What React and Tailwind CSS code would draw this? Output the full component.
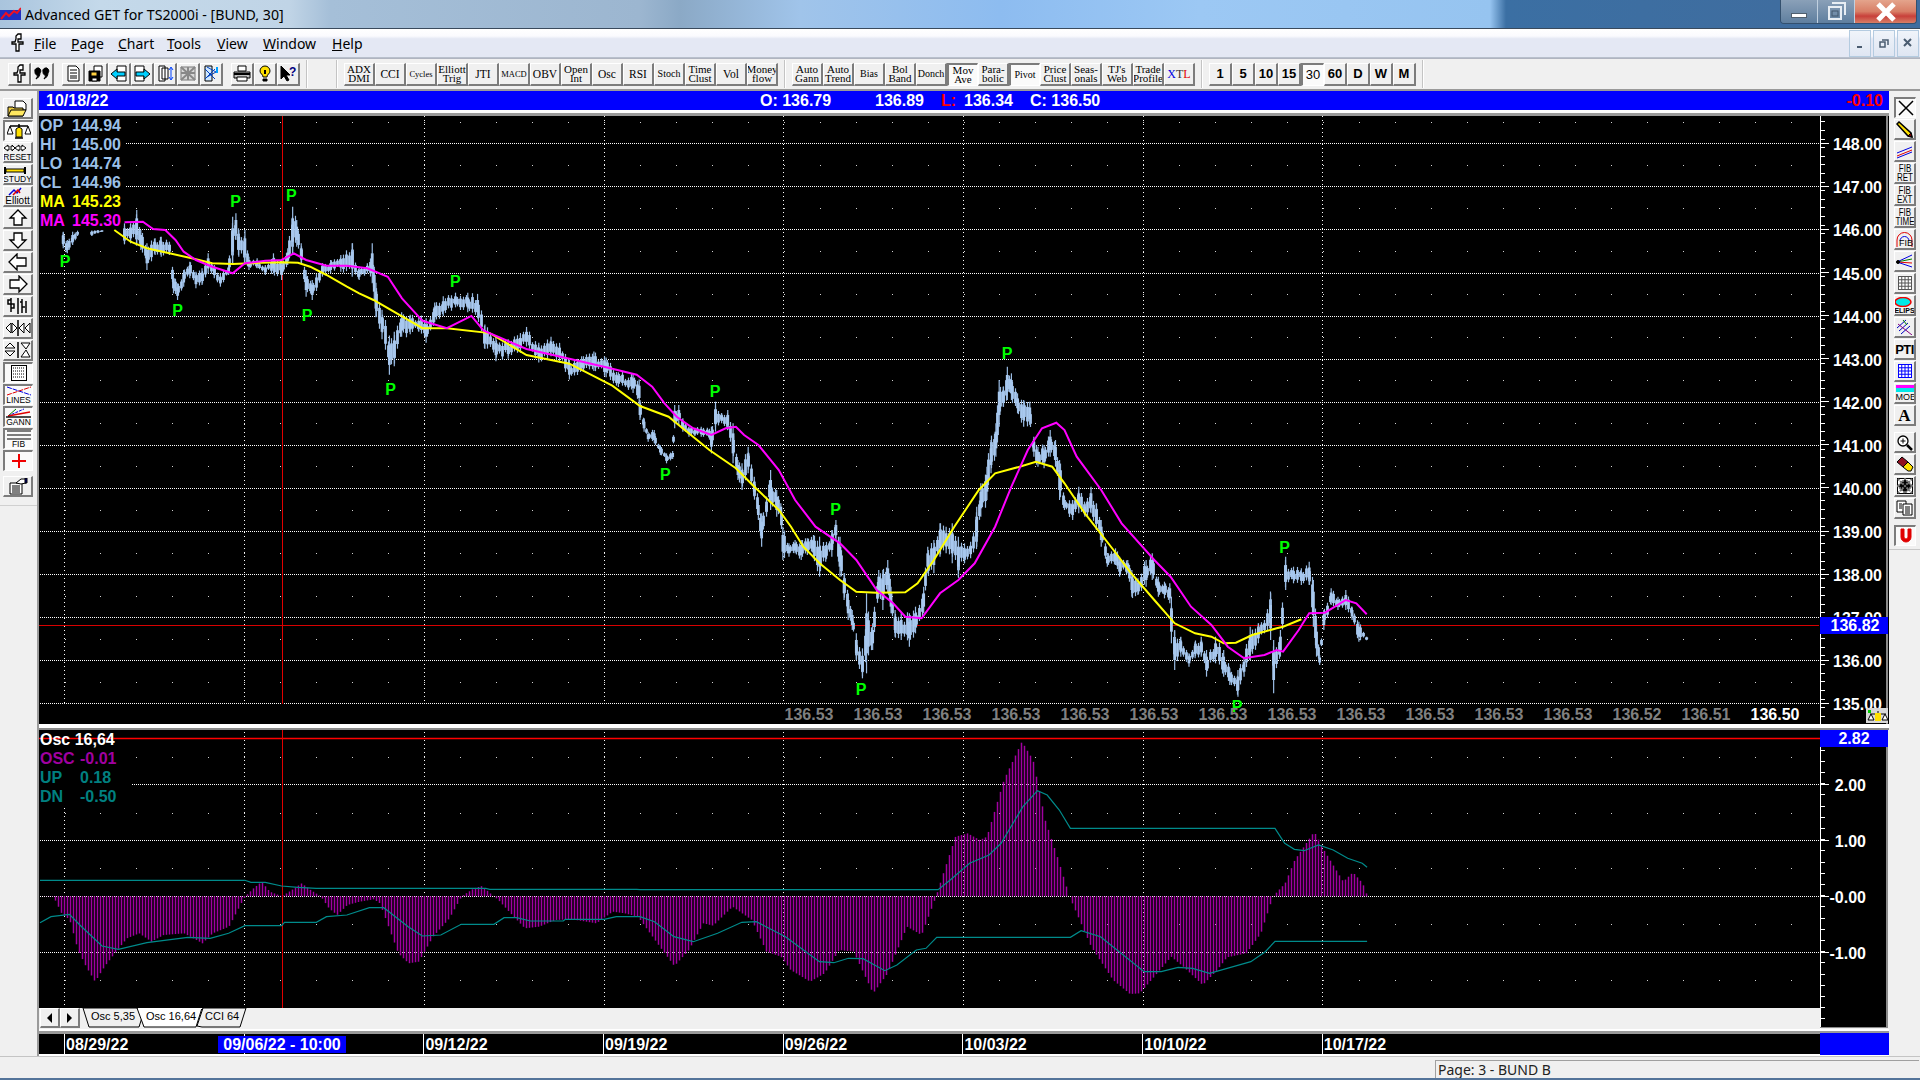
import React from 'react'

// --- chart data, all worked out in page pixels ---
const z1 = (a) => a.map(([x, y, h = 0]) => [x / 2.45, y / 3, h / 3])
const z9 = (a) => a.map(([x, y, h = 0]) => [640 + x / 2.45, 300 + y / 3, h / 3])
const z10 = (a) => a.map(([x, y, h = 0]) => [1100 + x / 1.912, 500 + y / 3, h / 3])
const z8 = (a) => a.map(([x, y]) => [x / 2.45, 700 + y / 3])
const z11 = (a) => a.map(([x, y]) => [640 + x / 2.063, 720 + y / 3])
const vw = (a) => a.map(([x, y, h = 0]) => [x * 1.2245, y * 1.2245, h * 1.2245])

const priceSegs = [
  z1([[155, 720, 25], [165, 740, 20], [178, 715, 20], [190, 700, 8]]),
  z1([[225, 700, 8], [240, 695, 5], [250, 693, 3]]),
  [
    ...z1([[305, 700, 30], [320, 700, 30], [335, 680, 50], [345, 720, 30], [360, 770, 40], [380, 740, 25], [395, 740, 30], [415, 745, 20], [425, 850, 30], [435, 875, 25], [450, 835, 25], [465, 810, 25], [480, 840, 25], [495, 830, 25], [510, 790, 30], [525, 815, 20], [540, 840, 20], [560, 810, 15], [570, 720, 70], [578, 680, 40], [585, 730, 40], [600, 740, 50], [610, 790, 20], [630, 790, 15], [650, 810, 15], [670, 790, 30], [690, 810, 30], [705, 770, 25], [717, 690, 70], [727, 700, 40], [738, 760, 30], [750, 850, 40], [765, 870, 30], [790, 810, 20], [810, 800, 20], [835, 790, 25], [863, 780, 50], [880, 820, 20], [900, 805, 15], [912, 790, 60], [917, 850, 50]]),
    ...vw([[307, 245, 14], [312, 265, 12], [318, 290, 16], [322, 285, 14], [328, 265, 10], [335, 265, 8], [342, 265, 6], [348, 270, 10], [355, 255, 8], [362, 250, 8], [372, 245, 6], [382, 247, 8], [390, 250, 10], [396, 275, 10], [405, 285, 10], [415, 285, 8], [425, 280, 8], [430, 275, 8], [440, 288, 8], [450, 283, 8], [457, 288, 8], [465, 302, 8], [475, 297, 6], [485, 295, 8], [495, 300, 8], [505, 310, 6], [517, 313, 8], [522, 320, 10]]),
    ...z9([[0, 330, 30], [10, 375, 20], [20, 410, 15], [35, 410, 20], [50, 450, 15], [65, 475, 15], [80, 465, 12], [85, 350, 35], [95, 345, 30], [105, 375, 20], [120, 395, 15], [135, 395, 12], [150, 395, 15], [165, 395, 12], [175, 420, 40], [185, 350, 45], [200, 355, 15], [215, 360, 30], [228, 430, 60], [240, 510, 30], [250, 530, 40], [265, 480, 40], [280, 560, 30], [290, 630, 30], [298, 690, 50], [310, 620, 30], [320, 570, 60], [335, 610, 40], [345, 630, 20], [350, 730, 50], [365, 750, 20], [380, 740, 20], [395, 750, 30], [410, 740, 25], [425, 740, 35], [440, 770, 60], [455, 760, 25], [470, 730, 40], [480, 690, 30], [490, 770, 60], [500, 860, 40], [510, 920, 40], [520, 960, 30], [530, 1040, 40], [545, 1090, 45], [555, 1000, 120], [570, 1010, 40], [585, 850, 40], [595, 870, 60], [607, 830, 50], [615, 900, 40], [625, 970, 40], [640, 980, 40], [660, 990, 50], [675, 960, 40], [695, 900, 40], [705, 780, 40], [720, 770, 50], [735, 720, 50], [750, 720, 40], [765, 730, 60], [780, 770, 60], [795, 760, 30], [810, 750, 25], [825, 680, 60], [835, 600, 50], [850, 550, 50], [860, 470, 50], [872, 420, 50], [880, 310, 70], [890, 290, 30], [900, 250, 50], [910, 260, 40], [925, 310, 30], [940, 340, 40], [955, 340, 35], [965, 440, 30], [975, 470, 30], [990, 470, 35], [1005, 430, 40], [1018, 460, 40], [1028, 540, 60], [1040, 610, 20], [1060, 630, 30], [1075, 600, 40], [1090, 630, 20], [1105, 600, 40], [1118, 650, 40], [1130, 700, 40], [1145, 780, 20], [1165, 770, 25], [1175, 800, 30], [1195, 800, 20], [1205, 850, 40], [1220, 860, 25], [1240, 820, 40], [1255, 800, 40], [1270, 860, 30], [1285, 870, 25], [1298, 880, 30], [1302, 960, 70], [1310, 1050, 60], [1325, 1040, 30], [1345, 1080, 20], [1360, 1050, 25], [1375, 1040, 30], [1388, 1090, 40], [1410, 1050, 40], [1430, 1090, 40], [1445, 1130, 25], [1465, 1150, 40], [1480, 1100, 30], [1495, 1030, 50], [1515, 1000, 30], [1530, 980, 20], [1545, 950, 70]]),
    ...z10([[332, 500, 80], [345, 430, 40], [355, 220, 50], [370, 225, 25], [385, 230, 25], [400, 220, 35], [408, 310, 70], [414, 420, 50], [420, 480, 15], [428, 360, 30], [442, 290, 25], [455, 310, 20], [470, 300, 30], [482, 340, 20], [495, 395, 30], [510, 415, 5]]),
  ],
]

const yellow = [
  ...z1([[280, 690], [320, 725], [360, 745], [415, 760], [470, 775], [520, 790], [570, 792], [640, 788], [690, 787], [730, 788], [760, 800], [800, 825], [850, 860], [880, 880], [915, 900]]),
  ...vw([[345, 268], [365, 268], [400, 272], [430, 290], [465, 297], [500, 315]]),
  ...z9([[0, 318], [70, 350], [100, 380], [130, 410], [170, 450], [235, 505], [280, 560], [340, 630], [370, 680], [400, 740], [440, 790], [490, 840], [530, 875], [580, 878], [650, 877], [680, 850], [720, 780], [770, 680], [830, 570], [870, 520], [930, 500], [970, 485], [1010, 500], [1040, 550], [1090, 640], [1160, 750], [1200, 815], [1260, 900], [1310, 970], [1360, 1000], [1400, 1010], [1430, 1030], [1460, 1028], [1500, 1005], [1560, 985]]),
  ...z10([[350, 380], [385, 358]]),
]

const magenta = [
  ...z1([[305, 667], [350, 665], [375, 687], [405, 690], [430, 720], [450, 755], [480, 780], [520, 800], [570, 820], [600, 790], [650, 782], [690, 780], [720, 760], [750, 780], [800, 797], [850, 797], [900, 805], [950, 830], [985, 895]]),
  ...vw([[345, 262], [365, 268], [385, 258], [395, 270], [430, 285], [465, 293], [495, 300], [520, 306]]),
  ...z9([[0, 232], [30, 260], [60, 310], [90, 350], [130, 385], [175, 405], [210, 385], [235, 380], [255, 405], [290, 435], [340, 510], [380, 600], [430, 680], [490, 730], [530, 780], [580, 870], [620, 910], [650, 950], [690, 955], [735, 880], [780, 840], [820, 790], [870, 680], [910, 560], [950, 450], [985, 385], [1020, 368], [1040, 390], [1070, 470], [1130, 570], [1180, 670], [1260, 780], [1300, 830], [1350, 920], [1400, 975], [1440, 1040], [1480, 1075], [1530, 1065], [1560, 1050]]),
  ...z10([[350, 455], [380, 390], [400, 340], [430, 338], [470, 300], [490, 310], [510, 343]]),
]

const oscPts = [
  ...z8([[98, 589], [130, 590], [150, 640], [170, 660], [190, 750], [210, 800], [232, 845], [255, 800], [280, 760], [310, 715], [340, 700], [370, 725], [400, 705], [450, 700], [495, 730], [520, 700], [560, 680], [590, 610], [600, 589], [620, 565], [640, 545], [660, 575], [690, 589], [720, 565], [738, 550], [760, 570], [785, 589], [805, 625], [825, 645], [850, 615], [880, 605], [915, 598], [930, 610], [975, 760], [1000, 790], [1025, 785], [1060, 710], [1100, 655], [1130, 589], [1160, 565], [1180, 558], [1200, 580], [1220, 600], [1250, 640], [1285, 685], [1320, 680], [1360, 660], [1400, 658], [1460, 670], [1500, 635], [1530, 640], [1560, 650]]),
  ...z11([[0, 600], [15, 630], [40, 680], [70, 738], [100, 690], [130, 610], [150, 617], [190, 560], [230, 600], [260, 695], [290, 710], [310, 750], [350, 785], [380, 760], [410, 690], [440, 695], [480, 820], [510, 760], [550, 620], [580, 645], [610, 529], [625, 460], [650, 350], [675, 340], [700, 360], [715, 350], [750, 180], [787, 65], [810, 120], [835, 300], [860, 410], [885, 529], [900, 580], [930, 680], [975, 780], [1010, 822], [1030, 820], [1060, 770], [1095, 710], [1120, 740], [1160, 795], [1190, 750], [1210, 712], [1250, 700], [1280, 640], [1305, 529], [1330, 490], [1350, 420], [1390, 335], [1410, 390], [1450, 485], [1470, 457], [1490, 490], [1500, 529]]),
]

const upper = [
  ...z8([[98, 541], [600, 541], [615, 547], [650, 547], [690, 558], [730, 562], [775, 565], [1190, 565], [1200, 568], [1560, 568]]),
  ...z11([[0, 509], [615, 509], [640, 480], [680, 430], [720, 405], [745, 370], [790, 260], [820, 212], [840, 225], [865, 270], [888, 325], [1310, 325], [1330, 370], [1350, 388], [1370, 392], [1400, 375], [1430, 390], [1460, 415], [1490, 430], [1500, 442]]),
]

const lower = [
  ...z8([[98, 668], [125, 650], [170, 643], [200, 680], [250, 738], [290, 748], [360, 728], [460, 712], [515, 715], [560, 700], [600, 677], [690, 677], [697, 667], [775, 667], [800, 650], [850, 645], [905, 623], [940, 623], [1000, 680], [1035, 708], [1080, 705], [1130, 673], [1210, 673], [1235, 653], [1265, 653], [1300, 663], [1380, 663], [1385, 658], [1480, 658], [1510, 650], [1560, 650]]),
  ...z11([[0, 590], [30, 605], [70, 650], [110, 665], [160, 640], [210, 607], [240, 605], [300, 650], [370, 725], [400, 728], [430, 715], [460, 716], [505, 752], [530, 735], [570, 690], [590, 685], [612, 652], [888, 652], [910, 632], [950, 650], [1040, 755], [1075, 755], [1110, 742], [1140, 745], [1175, 760], [1260, 725], [1290, 695], [1310, 664], [1500, 664]]),
]

const toPoints = (a) => a.map(([x, y]) => x.toFixed(1) + ',' + y.toFixed(1)).join(' ')

const lerp = (pts, x) => {
  for (let i = 1; i < pts.length; i++) {
    if (x <= pts[i][0]) {
      const a = pts[i - 1]
      const b = pts[i]
      const t = (x - a[0]) / Math.max(b[0] - a[0], 0.01)
      return [a[1] + (b[1] - a[1]) * t, (a[2] || 0) + ((b[2] || 0) - (a[2] || 0)) * t]
    }
  }
  const l = pts[pts.length - 1]
  return [l[1], l[2] || 0]
}

let seed = 12345
const rnd = () => {
  seed = (seed * 1103515245 + 12345) & 0x7fffffff
  return seed / 0x7fffffff
}

const priceBars = []
priceSegs.forEach((seg) => {
  for (let x = seg[0][0]; x <= seg[seg.length - 1][0]; x += 3) {
    const [c, h] = lerp(seg, x)
    const k = 0.45 + 0.55 * rnd()
    const off = (rnd() - 0.5) * h * 0.5
    priceBars.push({ x, y1: c + off - h * k, y2: c + off + h * k, t1: c + off - h * k * 0.6, t2: c + off + h * k * 0.6 })
  }
  seg.forEach(([x, c, h]) => priceBars.push({ x, y1: c - h, y2: c + h, t1: c - h * 0.5, t2: c + h * 0.5 }))
})

const oscBars = []
for (let x = 40; x <= 1367; x += 3) {
  oscBars.push({ x, y: lerp(oscPts, x)[0] })
}

const priceY = (p) => 143.3 + (148 - p) * 43.08
const prices = [148, 147, 146, 145, 144, 143, 142, 141, 140, 139, 138, 137, 136, 135]
const vLines = [64.5, 244.5, 424.5, 604.5, 783.5, 963.5, 1143.5, 1322.5]
const dotXs = Array.from({ length: 49 }, (_, i) => Math.round(64.5 + i * 35.96))
const peaks = [[65, 261], [235.5, 201], [291.4, 195], [177.6, 310], [307, 315], [390.6, 389], [455.3, 281], [665.3, 474], [715, 390.7], [835.5, 509], [861, 689], [1007, 353], [1237, 705.7], [1284.6, 547]]
const lastLabels = ['136.53', '136.53', '136.53', '136.53', '136.53', '136.53', '136.53', '136.53', '136.53', '136.53', '136.53', '136.53', '136.52', '136.51', '136.50']

// --- buttons ---
const RAISED = 'border-t border-l border-b-2 border-r-2 border-t-white border-l-white border-b-[#7c7c7c] border-r-[#7c7c7c] bg-[#f0f0f0]'
const SUNKEN = 'border-t-2 border-l-2 border-b border-r border-t-[#7c7c7c] border-l-[#7c7c7c] border-b-white border-r-white bg-[#fafafa]'

const Btn = ({ pressed, size, children }) => (
  <div className={`${size} shrink-0 flex items-center justify-center overflow-hidden text-black ${pressed ? SUNKEN : RAISED}`}>
    {children}
  </div>
)

const Sep = () => <div className="w-[2px] h-[28px] bg-[#c4c4c4] border-r border-white shrink-0" />

const TextBtn = ({ lines, pressed, children }) => (
  <Btn pressed={pressed} size="w-[31px] h-[23px]">
    {children || (
      <div className="font-['Liberation_Serif',serif] text-center whitespace-nowrap">
        {lines.length > 1
          ? lines.map((l) => <div key={l} className="text-[11px] leading-[9px]">{l}</div>)
          : <div className={lines[0].length > 3 ? (lines[0].length > 5 || lines[0] === 'MACD' ? 'text-[8.5px] leading-[12px]' : 'text-[10px] leading-[12px]') : 'text-[11.5px] leading-[12px]'}>{lines[0]}</div>}
      </div>
    )}
  </Btn>
)

const Svg = ({ w = 18, h = 17, children }) => (
  <svg width={w} height={h} viewBox={`0 0 ${w} ${h}`} fill="none" stroke="#000" strokeWidth="1">{children}</svg>
)

const Pin = () => (
  <Svg w={13} h={20}>
    <path d="M7 1h3v5H7v3h5v2H8v7H5v-7H1V9h3l1-3V3z" strokeWidth="1.3" fill="#fff" />
  </Svg>
)

const Doc = () => <><path d="M4 1h8l3 3v12H4z" fill="#fff" /><path d="M6 5h7M6 8h7M6 11h7M6 13h7" /></>

const ToolIcons = [
  <Pin key="a" />,
  <Svg key="b"><path d="M2 7a3 3 0 1 1 5 1c0 3-2 5-4 6 1-2 2-3 1-4-1 0-2-1-2-3zM10 7a3 3 0 1 1 5 1c0 3-2 5-4 6 1-2 2-3 1-4-1 0-2-1-2-3z" fill="#000" /></Svg>,
  <Svg key="c"><Doc /></Svg>,
  <Svg key="d"><path d="M7 1h8v11H7z" fill="#fff" /><path d="M2 6h11v10H2z" fill="#000" /><path d="M4 7h6v4H4z" fill="#ffd040" /><path d="M5 13h5v3H5z" fill="#fff" /></Svg>,
  <Svg key="e"><path d="M7 1h9v15H7z" fill="#fff" /><path d="M1 9l6-5v3h8v4H7v3z" fill="#00d0ff" /></Svg>,
  <Svg key="f"><path d="M2 1h9v15H2z" fill="#fff" /><path d="M17 9l-6-5v3H3v4h8v3z" fill="#00d0ff" /></Svg>,
  <Svg key="g"><path d="M3 1h6v15H3zM6 3h6v11H6z" fill="#fff" /><path d="M15 3v11M13 5l2-3 2 3M13 12l2 3 2-3" stroke="#0040ff" /></Svg>,
  <Svg key="h"><path d="M2 2h14v13H2z" fill="#d8d8d8" stroke="#777" /><path d="M2 2l14 13M16 2L2 15M9 2v13M2 8h14" stroke="#888" strokeWidth="2" /></Svg>,
  <Svg key="i"><path d="M3 1h7v15H3z" fill="#cfe8ff" /><path d="M3 4l10 10M13 4L3 14M5 2l9 5-9 5" stroke="#0040c0" /><path d="M15 2v6" stroke="#00a0ff" strokeWidth="2" /></Svg>,
  <Svg key="j"><path d="M5 1h8v5H5z" fill="#fff" /><path d="M1 7h16v6H1z" fill="#c0c0c0" /><path d="M1 9h16" stroke="#000" strokeWidth="2" /><path d="M4 12h10v4H4z" fill="#fff" /></Svg>,
  <Svg key="k"><path d="M9 1a5 5 0 0 1 5 5c0 3-3 3-3 6H7c0-3-3-3-3-6a5 5 0 0 1 5-5z" fill="#ffe000" /><path d="M7 14h4v2H7z" fill="#000" /><path d="M8 5h2v4H8z" fill="#000" stroke="none" /></Svg>,
  <Svg key="l"><path d="M2 1v13l3-3 3 5 2-1-3-5h4z" fill="#000" /><text x="10" y="11" className="fill-[#000080] font-bold text-[12px]" stroke="none">?</text></Svg>,
]

const Gridlet = ({ color = '#000', n = 4 }) => (
  <Svg w={16} h={16}>
    <rect x="1.5" y="1.5" width="13" height="13" stroke={color} fill="#fff" />
    {Array.from({ length: n - 1 }, (_, i) => (
      <path key={i} d={`M${1.5 + (13 / n) * (i + 1)} 1.5v13M1.5 ${1.5 + (13 / n) * (i + 1)}h13`} stroke={color} />
    ))}
  </Svg>
)

const Micro = ({ children, cls = 'text-[8.5px] leading-[8px]' }) => (
  <div className={`${cls} text-center whitespace-nowrap`}>{children}</div>
)

const arrowD = {
  up: 'M11 1l8 8h-4v7H7V9H3z',
  down: 'M11 17l8-8h-4V2H7v7H3z',
  left: 'M2 9l8-8v4h9v8h-9v4z',
  right: 'M20 9l-8-8v4H3v8h9v4z',
}
const Arrow = ({ d }) => <Svg w={22} h={18}><path d={arrowD[d]} strokeWidth="1.3" fill="#fff" /></Svg>

const Scales = ({ s = 1 }) => (
  <svg width={24 * s} height={17 * s} viewBox="0 0 24 17" fill="none" stroke="#000">
    <path d="M3 3h18M12 1v13M8 15h8" strokeWidth="1.5" />
    <path d="M3 3l-3 8h6zM21 3l-3 8h6z" fill="#fff" />
    <path d="M9 6l3-2 3 2v8H9z" fill="#ffe000" />
  </svg>
)

const LeftItems = [
  { k: 'open', el: <Svg w={22} h={17}><path d="M8 1h8l3 3v6H8z" fill="#fff" /><path d="M1 7h5l1 1h9v8H1z" fill="#e8c840" /><path d="M1 16l3-6h15l-3 6z" fill="#ffe860" /></Svg> },
  { k: 'scales', pressed: true, el: <Scales /> },
  { k: 'reset', el: <div><Svg w={24} h={9}><path d="M1 4l4-3v2h4V1l3 3-3 3V5H5v2zM12 4l4-3v2h3V1l4 3-4 3V5h-3v2z" fill="#fff" /></Svg><Micro>RESET</Micro></div> },
  { k: 'study', el: <div><Svg w={24} h={9}><path d="M2 1v7M22 1v7" strokeWidth="2" /><path d="M3 3h18v3H3z" fill="#ffe000" /></Svg><Micro>STUDY</Micro></div> },
  { k: 'elliott', el: <div><Svg w={24} h={9}><path d="M4 8l5-5 3 3 4-5" stroke="#0000e0" strokeWidth="1.5" /><path d="M8 8l5-5 2 3" stroke="#e00000" strokeWidth="1.5" /></Svg><Micro cls="text-[10px] leading-[9px]">Elliott</Micro></div> },
  { k: 'u', el: <Arrow d="up" /> },
  { k: 'd', el: <Arrow d="down" /> },
  { k: 'l', el: <Arrow d="left" /> },
  { k: 'r', el: <Arrow d="right" /> },
  { k: 'bars', el: <Svg w={24} h={18}><path d="M5 1v14M5 3H2v4h3M5 7h3v4H5M12 1v16M16 2v14M16 5h-2M16 10h3M20 4v12" strokeWidth="1.5" /></Svg> },
  { k: 'hz', el: <Svg w={26} h={16}><path d="M1 8l5-5v10zM7 3l5 5-5 5zM14 8l5-5v10zM25 3l-5 5 5 5z" fill="#fff" /><path d="M13 0v16" strokeWidth="1.5" /></Svg> },
  { k: 'vt', el: <Svg w={26} h={16}><path d="M5 1l5 5H0zM0 9h10l-5 5zM16 1h9l-4 6zM16 15h9l-4-7z" fill="#fff" /><path d="M13 0v16" strokeWidth="1.5" /></Svg> },
  { k: 'dots', pressed: true, el: <svg width="16" height="16" viewBox="0 0 16 16"><rect x="0.5" y="0.5" width="15" height="15" fill="#fff" stroke="#000" /><path d="M2 3h12M2 6h12M2 9h12M2 12h12" stroke="#000" strokeDasharray="1 1" /></svg> },
  { k: 'lines', pressed: true, el: <div><Svg w={26} h={10}><path d="M1 1l24 8" stroke="#0000e0" strokeDasharray="5 1" /><path d="M1 9l24-8" stroke="#e00000" strokeDasharray="5 1" /></Svg><Micro>LINES</Micro></div> },
  { k: 'gann', pressed: true, el: <div><Svg w={26} h={10}><path d="M2 8l8-7" stroke="#008000" /><path d="M2 8l16-7" stroke="#0000e0" strokeDasharray="3 1" /><path d="M2 8l22-4" stroke="#e00000" strokeWidth="1.4" /><path d="M0 9h25" strokeWidth="1.4" /></Svg><Micro>GANN</Micro></div> },
  { k: 'fib', pressed: true, el: <div><Svg w={26} h={10}><path d="M1 1h24M1 5h24M1 9h24" strokeWidth="1.2" /></Svg><Micro>FIB</Micro></div> },
  { k: 'cross', pressed: true, el: <Svg w={18} h={16}><path d="M9 1v14M2 8h14" stroke="#f00000" strokeWidth="2" /></Svg> },
]

const FibLabel = ({ b }) => (
  <div className="text-[10px] leading-[9px] text-center scale-x-[0.8] whitespace-nowrap">
    <div>FIB</div>
    <div>{b}</div>
  </div>
)

const RightItems = [
  { k: 'x', pressed: true, el: <Svg w={16} h={16}><path d="M1 1l14 14M15 1L1 15" strokeWidth="1.5" /></Svg> },
  { k: 'pencil', el: <Svg w={17} h={17}><path d="M1 3l2-2 12 11 1 4-4-1z" fill="#ffe000" strokeWidth="1.5" /><path d="M12 15l3-3 1 4z" fill="#800000" /></Svg> },
  { k: 'lines', el: <Svg w={17} h={15}><path d="M1 9l15-6" stroke="#0000e0" /><path d="M1 12l15-6" stroke="#e00000" /><path d="M1 14l15-6" stroke="#0000e0" /></Svg> },
  { k: 'ret', el: <FibLabel b="RET" /> },
  { k: 'ext', el: <FibLabel b="EXT" /> },
  { k: 'time', el: <FibLabel b="TIME" /> },
  { k: 'arc', el: <div className="relative"><Svg w={17} h={17}><path d="M1 16V9a7.500 7.500 0 0 1 15 0v7" stroke="#e00000" /><path d="M4 10a4.500 4.500 0 0 1 9 0" stroke="#0000e0" /></Svg><span className="absolute left-[3px] bottom-0 text-[9px] leading-[9px]">FIB</span></div> },
  { k: 'fan', el: <Svg w={17} h={15}><path d="M1 8l15-7" stroke="#0000e0" /><path d="M1 8l15-3" stroke="#008000" /><path d="M1 8l15 1" stroke="#e00000" /><path d="M1 8l15 5" stroke="#0000e0" /><circle cx="2" cy="8" r="1.5" fill="#000" /></Svg> },
  { k: 'grid', el: <Gridlet color="#555" n={4} /> },
  { k: 'elips', el: <div><Svg w={18} h={10}><ellipse cx="9" cy="5" rx="8" ry="4.500" fill="#00e8e8" stroke="#f00000" strokeWidth="1.5" /></Svg><Micro cls="text-[7px] leading-[7px] font-bold">ELIPS</Micro></div> },
  { k: 'diag', el: <Svg w={17} h={16}><path d="M1 9l9-8M3 12l9-8M5 15l9-8" stroke="#0000c0" /><path d="M2 5l14 11" stroke="#800080" /><path d="M7 1l4 5" stroke="#008000" /></Svg> },
  { k: 'pti', el: <span className="font-bold text-[13px] leading-none tracking-[-0.5px]">PTI</span> },
  { k: 'bgrid', el: <Gridlet color="#0000ff" n={4} /> },
  { k: 'mob', el: <div className="w-[18px]"><div className="h-[3px] bg-[#ff00ff]" /><div className="h-[4px] bg-[#00e8e8]" /><Micro cls="text-[9px] leading-[10px]">MOB</Micro></div> },
  { k: 'a', el: <span className="font-['Liberation_Serif',serif] font-bold text-[17px] leading-none">A</span> },
  { k: 'mag', top: true, el: <Svg w={17} h={17}><circle cx="7" cy="7" r="5" fill="#fff" strokeWidth="1.3" /><path d="M7 4.500v5M4.500 7h5" /><path d="M11 11l5 5" strokeWidth="2.5" /></Svg> },
  { k: 'eraser', el: <Svg w={18} h={16}><path d="M1 6l5-5 6 5-5 5z" fill="#901020" /><path d="M7 11l5-5 5 5-2 4h-3z" fill="#ffe000" /></Svg> },
  { k: 'pat', el: <svg width="16" height="16" viewBox="0 0 16 16"><rect x="0.5" y="0.5" width="15" height="15" fill="#fff" stroke="#000" /><path d="M1 1l14 14M15 1L1 15M1 8l7-7 7 7-7 7z" stroke="#777" strokeWidth="2" strokeDasharray="2 1" /></svg> },
  { k: 'docs', el: <Svg w={17} h={16}><path d="M1 1h9v11H1z" fill="#fff" /><path d="M7 4h9v11H7z" fill="#fff" /><path d="M3 4h3M3 6h3M3 8h3M9 7h5M9 9h5M9 11h5M9 13h5" /></Svg> },
]

const LeftCol = () => (
  <div className="w-[39px] shrink-0 flex flex-col border-r-2 border-[#9a9a9a] bg-[#f0f0f0] pl-[3px]">
    <div className="flex flex-col gap-[1px] pt-[7px]">
      {LeftItems.map((it) => <Btn key={it.k} pressed={it.pressed} size="w-[30px] h-[21px]">{it.el}</Btn>)}
    </div>
    <div className="mt-[5px]">
      <Btn size="w-[30px] h-[21px]">
        <Svg w={20} h={17}><path d="M2 5h12v11H2z" fill="#fff" /><path d="M4 8h8M4 10h8M4 12h8M4 14h8" /><path d="M8 5l5-4 5 0v4l-5 1z" fill="#fff" /><path d="M17 0h2v5h-2z" fill="#000080" /></Svg>
      </Btn>
    </div>
    <div className="mt-[8px] -ml-[3px] h-[1px] bg-[#d0d0d0]" />
  </div>
)

const RightCol = () => (
  <div className="w-[31px] shrink-0 flex flex-col pl-[5px] pt-[6px] bg-[#f0f0f0]">
    <div className="flex flex-col gap-[1px] items-start">
      {RightItems.slice(0, 15).map((it) => <Btn key={it.k} pressed={it.pressed} size="w-[22px] h-[21px]">{it.el}</Btn>)}
    </div>
    <div className="flex flex-col gap-[1px] mt-[6px]">
      {RightItems.slice(15).map((it) => <Btn key={it.k} size="w-[22px] h-[21px]">{it.el}</Btn>)}
    </div>
    <div className="mt-[6px]">
      <Btn pressed size="w-[22px] h-[21px]">
        <Svg w={14} h={16}><path d="M2 1v8a5 5 0 0 0 10 0V1H9v8a2 2 0 0 1-4 0V1z" fill="#e00000" stroke="#e00000" /></Svg>
      </Btn>
    </div>
    <div className="mt-[3px] -ml-[5px] h-[1px] bg-[#c8c8c8]" />
  </div>
)

const TitleBar = () => (
  <div className="h-[29px] flex items-start border-b border-[#3a4a5c] bg-[linear-gradient(90deg,#a9c4dd_0,#c4d9ea_100px,#c0d4e6_290px,#a5bfd8_330px,#9cb6d0_640px,#8ba9c6_680px,#a0c4ea_800px,#8dbcf0_1000px,#9cc8f4_1200px,#96c4f0_1490px,#3b6fa3_1506px,#3f6d9f_1780px)]">
    <div className="w-[25px] h-[28px] flex items-center">
      <svg width="21" height="16" viewBox="0 0 21 16" fill="none">
        <path d="M0 4h21v10H0z" fill="#2030c0" />
        <path d="M1 13l5-6 3 3 5-5 3 2 4-5" stroke="#f01020" strokeWidth="2" />
      </svg>
    </div>
    <div className="font-['Noto_Sans',sans-serif] text-[14.2px] leading-[29px] text-black w-[1755px]">Advanced GET for TS2000i - [BUND, 30]</div>
    <div className="flex h-[24px] w-[137px] border border-t-0 border-[#33506e] rounded-b-[4px] overflow-hidden">
      <div className="w-[37px] flex items-end justify-center pb-[5px] bg-[linear-gradient(#8aa0b8,#5f7f9f)] border-r border-[#c0d0e0]"><div className="w-[16px] h-[5px] bg-white border border-[#50606f]" /></div>
      <div className="w-[37px] flex items-center justify-center bg-[linear-gradient(#8aa0b8,#5f7f9f)] border-r border-[#c0d0e0]">
        <svg width="19" height="19" viewBox="0 0 19 19" fill="none"><path d="M5 1h13v12" stroke="#e8eef4" strokeWidth="2" /><rect x="2" y="5" width="12" height="12" stroke="#e8eef4" strokeWidth="2" /><rect x="5" y="9" width="6" height="5" stroke="#40566c" /></svg>
      </div>
      <div className="flex-1 flex items-center justify-center bg-[linear-gradient(#e4a48c_0,#d87e66_50%,#c8403a_70%,#d87e66_100%)]">
        <svg width="20" height="20" viewBox="0 0 20 20"><path d="M2 2l16 16M18 2L2 18" stroke="#fff" strokeWidth="5" /></svg>
      </div>
    </div>
  </div>
)

const menus = [
  ['F', 'ile', 'w-[37px]'],
  ['P', 'age', 'w-[47px]'],
  ['C', 'hart', 'w-[49px]'],
  ['T', 'ools', 'w-[50px]'],
  ['V', 'iew', 'w-[46px]'],
  ['W', 'indow', 'w-[69px]'],
  ['H', 'elp', 'w-[40px]'],
]

const MenuBar = () => (
  <div className="h-[29px] flex items-center bg-[linear-gradient(#ffffff_0,#fbfbfe_25%,#e4e8f4_35%,#e4e8f4_100%)] border-b border-[#b8c0cc]">
    <div className="w-[34px] pl-[11px] flex"><Pin /></div>
    <div className="flex font-['Noto_Sans',sans-serif] text-[14px] text-black">
      {menus.map(([a, b, w]) => <div key={a} className={w}><span className="underline">{a}</span>{b}</div>)}
    </div>
    <div className="ml-auto flex gap-[2px] pr-[1px]">
      {['min', 'res', 'cls'].map((k) => (
        <div key={k} className="w-[22px] h-[27px] flex items-center justify-center border border-[#b4cbe0] bg-[linear-gradient(#f0f4fa,#dfe6f2)]">
          <svg width="10" height="10" viewBox="0 0 10 10" fill="none" stroke="#4a5c70" strokeWidth="1.5">
            {k === 'min' && <path d="M2 9h5" strokeWidth="2" />}
            {k === 'res' && <path d="M3 2h6v5M1 4h5v5H1z" />}
            {k === 'cls' && <path d="M1 1l7 7M8 1L1 8" strokeWidth="2" />}
          </svg>
        </div>
      ))}
    </div>
  </div>
)

const studies = [['ADX', 'DMI'], ['CCI'], ['Cycles'], ['Elliott', 'Trig'], ['JTI'], ['MACD'], ['OBV'], ['Open', 'Int'], ['Osc'], ['RSI'], ['Stoch'], ['Time', 'Clust'], ['Vol'], ['Money', 'flow']]
const autos = [['Auto', 'Gann'], ['Auto', 'Trend'], ['Bias'], ['Bol', 'Band'], ['Donch'], ['Mov', 'Ave'], ['Para-', 'bolic'], ['Pivot'], ['Price', 'Clust'], ['Seas-', 'onals'], ['TJ\'s', 'Web'], ['Trade', 'Profile']]
const periods = ['1', '5', '10', '15', '30', '60', 'D', 'W', 'M']

const Toolbar = () => (
  <div className="h-[33px] flex items-center bg-[#f0f0f0] border-t border-[#b0b4c0] border-b-2 border-b-[#9a9a9a] pl-[8px]">
    <div className="flex">{ToolIcons.slice(0, 2).map((ic, i) => <Btn key={i} size="w-[23px] h-[23px]">{ic}</Btn>)}</div>
    <div className="flex ml-[8px]">{ToolIcons.slice(2, 9).map((ic, i) => <Btn key={i} size="w-[23px] h-[23px]">{ic}</Btn>)}</div>
    <div className="flex ml-[8px]">{ToolIcons.slice(9).map((ic, i) => <Btn key={i} size="w-[23px] h-[23px]">{ic}</Btn>)}</div>
    <div className="ml-[6px]"><Sep /></div>
    <div className="ml-[28px]"><Sep /></div>
    <div className="flex ml-[6px]">{studies.map((s) => <TextBtn key={s.join()} lines={s} />)}</div>
    <div className="ml-[6px]"><Sep /></div>
    <div className="flex ml-[6px]">
      {autos.map((s) => <TextBtn key={s.join()} lines={s} pressed={s[0] === 'Mov' || s[0] === 'Pivot'} />)}
      <TextBtn>
        <div className="font-['Liberation_Serif',serif] text-[12px]"><span className="text-[#0000e0]">X</span><span className="text-[#333]">T</span><span className="text-[#e00000]">L</span></div>
      </TextBtn>
    </div>
    <div className="ml-[6px]"><Sep /></div>
    <div className="flex ml-[6px]">
      {periods.map((p) => (
        <Btn key={p} pressed={p === '30'} size="w-[23px] h-[23px]">
          <span className={`text-[13px] ${p === '30' ? 'font-normal' : 'font-bold'}`}>{p}</span>
        </Btn>
      ))}
    </div>
    <div className="ml-[6px]"><Sep /></div>
  </div>
)

const HeaderBar = () => (
  <div className="h-[19px] flex items-center bg-[#0000ff] font-bold text-[16px] text-white leading-none whitespace-nowrap">
    <span className="w-[721px] pl-[7px]">10/18/22</span>
    <span className="w-[115px]">O: 136.79</span>
    <span className="w-[66px]">136.89</span>
    <span className="w-[23px] text-[#ff0000]">L:</span>
    <span className="w-[66px]">136.34</span>
    <span>C: 136.50</span>
    <span className="ml-auto pr-[6px] text-[#ff0000]">-0.10</span>
  </div>
)

const Row = ({ a, b, cls, w = 'w-[32px]' }) => (
  <div className={`flex h-[19px] leading-[19px] ${cls}`}>
    <span className={w}>{a}</span>
    <span>{b}</span>
  </div>
)

const MainChart = () => (
  <div className="relative h-[608px] bg-black font-bold text-[16px]">
    <svg width="1849" height="608" viewBox="39 116 1849 608" className="block">
      {prices.map((p) => (
        <line key={p} x1={priceY(p) < 231 ? 126 : 40} x2="1820" y1={Math.round(priceY(p)) + 0.5} y2={Math.round(priceY(p)) + 0.5} stroke="#ffffff" strokeDasharray="1 1" />
      ))}
      {vLines.map((x, i) => (
        <line key={x} x1={x} x2={x} y1={i === 0 ? 234 : 116} y2="704" stroke="#ffffff" strokeDasharray="1 3" />
      ))}
      {[...Array(14).keys()].map((i) =>
        dotXs.filter((x) => x > 130 || i > 2).map((x) => (
          <rect key={i + '-' + x} x={x} y={Math.round(121.8 + i * 43.08)} width="1" height="1" fill="#d0d0d0" />
        ))
      )}
      <line x1="282.500" x2="282.500" y1="116" y2="704" stroke="#e00000" />
      <line x1="39" x2="1820" y1="625.5" y2="625.5" stroke="#d80000" />
      {priceBars.map((b, i) => (
        <g key={i}>
          <line x1={b.x} x2={b.x} y1={b.y1} y2={b.y2} stroke="#9abce4" strokeWidth="1.2" />
          <line x1={b.x} x2={b.x} y1={b.t1} y2={b.t2} stroke="#a8c8ee" strokeWidth="2.8" />
        </g>
      ))}
      <polyline points={toPoints(yellow)} fill="none" stroke="#ffff00" strokeWidth="2" />
      <polyline points={toPoints(magenta)} fill="none" stroke="#ff00ff" strokeWidth="2" />
      {peaks.map(([x, y]) => (
        <text key={x} x={x} y={y + 6} textAnchor="middle" className="fill-[#00ff00]">P</text>
      ))}
      {lastLabels.map((t, i) => (
        <text key={i} x={809 + i * 69} y="720" textAnchor="middle" className={i === 14 ? 'fill-white' : 'fill-[#808080]'}>{t}</text>
      ))}
      <rect x="1819" y="116" width="69" height="608" fill="#000" />
      <line x1="1820.500" x2="1820.500" y1="116" y2="724" stroke="#fff" />
      <line x1="1887" x2="1887" y1="116" y2="724" stroke="#8a8a8a" strokeWidth="2" />
      {Array.from({ length: 71 }, (_, i) => 121.8 + i * 8.616).map((y, i) => (
        <line key={i} x1="1821" x2="1825" y1={y} y2={y} stroke="#fff" shapeRendering="crispEdges" />
      ))}
      {prices.map((p) => (
        <g key={p}>
          <line x1="1821" x2="1829" y1={priceY(p)} y2={priceY(p)} stroke="#fff" shapeRendering="crispEdges" />
          <text x="1882" y={priceY(p) + 7} textAnchor="end" className="fill-white">{p.toFixed(2)}</text>
        </g>
      ))}
      <rect x="1820" y="617" width="68" height="17" fill="#0000ff" />
      <text x="1855" y="631" textAnchor="middle" className="fill-white">136.82</text>
      <rect x="1866" y="708" width="22" height="15" fill="#d8d8d8" />
      <path d="M1868 710h3v3h-3z" fill="#00d000" />
      <path d="M1870 714h16M1878 711v10" stroke="#000" />
      <path d="M1875 713h6v8h-6z" fill="#ffe000" />
      <path d="M1868 720l3-6 3 6zM1882 720l3-6 3 6z" fill="#fff" stroke="#000" />
    </svg>
    <div className="absolute left-[1px] top-0 text-[#9cc0e8]">
      <Row a="OP" b="144.94" />
      <Row a="HI" b="145.00" />
      <Row a="LO" b="144.74" />
      <Row a="CL" b="144.96" />
      <Row a="MA" b="145.23" cls="text-[#ffff00]" />
      <Row a="MA" b="145.30" cls="text-[#ff00ff]" />
    </div>
  </div>
)

const OscChart = () => (
  <div className="relative h-[278px] bg-black font-bold text-[16px]">
    <svg width="1781" height="278" viewBox="39 730 1781 278" className="block">
      {[784.5, 840.5, 896.5, 952.5].map((y) => (
        <line key={y} x1={y < 800 ? 132 : 40} x2="1820" y1={y} y2={y} stroke="#ffffff" strokeDasharray="1 1" />
      ))}
      {vLines.map((x, i) => (
        <line key={x} x1={x} x2={x} y1={i === 0 ? 808 : 732} y2="1006" stroke="#ffffff" strokeDasharray="1 3" />
      ))}
      {[757, 813, 868, 924, 980].map((y, i) =>
        dotXs.filter((x) => x > 130 || i > 0).map((x) => (
          <rect key={y + '-' + x} x={x} y={y} width="1" height="1" fill="#d0d0d0" />
        ))
      )}
      <line x1="39" x2="1820" y1="738.5" y2="738.5" stroke="#ff0000" strokeWidth="1.5" />
      <line x1="282.500" x2="282.500" y1="730" y2="1008" stroke="#e00000" />
      {oscBars.map((b) => (
        <line key={b.x} x1={b.x + 0.5} x2={b.x + 0.5} y1="896.3" y2={b.y} stroke="#a000a0" strokeWidth="1.500" />
      ))}
      <polyline points={toPoints(upper)} fill="none" stroke="#008b8b" strokeWidth="1.200" />
      <polyline points={toPoints(lower)} fill="none" stroke="#008b8b" strokeWidth="1.200" />
    </svg>
    <div className="absolute left-[1px] top-0">
      <div className="h-[19px] leading-[19px] text-white">Osc 16,64</div>
      <Row a="OSC" b="-0.01" cls="text-[#a000a0]" w="w-[40px]" />
      <Row a="UP" b="0.18" cls="text-[#008080]" w="w-[40px]" />
      <Row a="DN" b="-0.50" cls="text-[#008080]" w="w-[40px]" />
    </div>
  </div>
)

const OscAxis = () => (
  <svg width="68" height="299" viewBox="1820 730 68 299" className="block bg-[#f0f0f0] font-bold text-[16px]">
    <rect x="1820" y="730" width="68" height="297" fill="#000" />
    <line x1="1820.500" x2="1820.500" y1="730" y2="1029" stroke="#fff" />
    <line x1="1887" x2="1887" y1="730" y2="1028" stroke="#8a8a8a" strokeWidth="2" />
    <line x1="1820" x2="1888" y1="1027.500" y2="1027.500" stroke="#8a8a8a" />
    {Array.from({ length: 26 }, (_, i) => 750 + i * 11.2).map((y) => (
      <line key={y} x1="1821" x2="1825" y1={y} y2={y} stroke="#fff" shapeRendering="crispEdges" />
    ))}
    {[[784.3, '2.00'], [840.3, '1.00'], [896.3, '-0.00'], [952.3, '-1.00']].map(([y, t]) => (
      <g key={t}>
        <line x1="1821" x2="1829" y1={y} y2={y} stroke="#fff" shapeRendering="crispEdges" />
        <text x="1866" y={y + 7} textAnchor="end" className="fill-white">{t}</text>
      </g>
    ))}
    <rect x="1820" y="730" width="68" height="17" fill="#0000ff" />
    <text x="1854" y="744" textAnchor="middle" className="fill-white">2.82</text>
  </svg>
)

const Tabs = () => (
  <div className="h-[21px] flex bg-[#f0f0f0] pl-[1px]">
    <div className="w-[20px] h-[20px] flex items-center justify-center border-t border-l border-b-2 border-r-2 border-t-white border-l-white border-[#7c7c7c]">
      <div className="w-0 h-0 border-y-[5px] border-y-transparent border-r-[5px] border-r-black" />
    </div>
    <div className="w-[20px] h-[20px] flex items-center justify-center border-t border-l border-b-2 border-r-2 border-t-white border-l-white border-[#7c7c7c]">
      <div className="w-0 h-0 border-y-[5px] border-y-transparent border-l-[5px] border-l-black" />
    </div>
    <svg width="170" height="21" viewBox="0 0 170 21" className="text-[11px]">
      <path d="M3 0l6 19h50l6-19z" fill="#f0f0f0" stroke="#000" />
      <path d="M122 0l-6 19h-52l-7-19z" fill="#fff" stroke="#000" />
      <path d="M166 0l-6 19h-38l-5 -1 6-18z" fill="#f0f0f0" stroke="#000" />
      <path d="M58 0h64" stroke="#fff" strokeWidth="2" />
      <text x="11" y="12" className="fill-black">Osc 5,35</text>
      <text x="66" y="12" className="fill-black">Osc 16,64</text>
      <text x="125" y="12" className="fill-black">CCI 64</text>
    </svg>
  </div>
)

const dates = ['08/29/22', '', '09/12/22', '09/19/22', '09/26/22', '10/03/22', '10/10/22', '10/17/22']

const DateBar = () => (
  <div className="h-[20px] flex bg-black font-bold text-[16px] leading-[21px] text-white relative whitespace-nowrap">
    <div className="w-[25px] shrink-0" />
    {dates.map((d, i) => (
      <div key={i} className="w-[179.7px] shrink-0 border-l border-white pl-[1px]">{d}</div>
    ))}
    <div className="absolute left-[179px] top-[2px] h-[17px] w-[128px] bg-[#0000ff] text-center leading-[18px]">09/06/22 - 10:00</div>
    <div className="absolute right-0 -top-[1px] w-[69px] h-[22px] bg-[#0000ff]" />
  </div>
)

const StatusBar = () => (
  <div className="h-[24px] flex border-t border-[#c4c4c4] bg-[#f0f0f0] relative">
    <div className="ml-[1435px] mt-[3px] w-[484px] h-[18px] border-t border-l border-[#a0a0a0] pl-[2px] font-['Noto_Sans',sans-serif] text-[14px] leading-[18px] text-[#222]">Page: 3 - BUND B</div>
    <div className="absolute bottom-0 left-0 right-0 h-[2px] bg-[#54749a]" />
  </div>
)

const App = () => (
  <div className="w-[1920px] h-[1080px] flex flex-col overflow-hidden bg-[#f0f0f0] font-['Liberation_Sans',sans-serif]">
    <TitleBar />
    <MenuBar />
    <Toolbar />
    <div className="flex h-[965px]">
      <LeftCol />
      <div className="w-[1850px] flex flex-col">
        <HeaderBar />
        <div className="h-[3px] bg-white" />
        <div className="h-[3px] bg-[#9a9a9a]" />
        <MainChart />
        <div className="h-[4px] bg-white" />
        <div className="h-[2px] bg-[#8a8a8a]" />
        <div className="flex h-[299px]">
          <div className="w-[1781px] flex flex-col">
            <OscChart />
            <Tabs />
          </div>
          <OscAxis />
        </div>
        <div className="h-[2px] bg-white" />
        <div className="h-[3px] bg-[#9a9a9a]" />
        <DateBar />
        <div className="h-[2px] bg-white" />
      </div>
      <RightCol />
    </div>
    <StatusBar />
  </div>
)

export default App
